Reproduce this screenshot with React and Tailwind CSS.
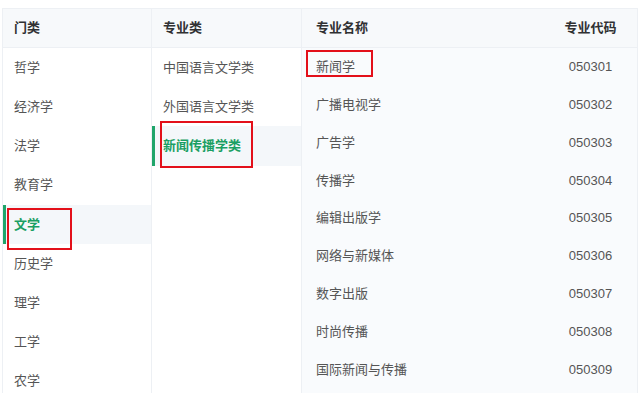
const categories = ["哲学", "经济学", "法学", "教育学", "文学", "历史学", "理学", "工学", "农学"];
const subCategories = ["中国语言文学类", "外国语言文学类", "新闻传播学类"];
const majors = [
  { name: "新闻学", code: "050301" },
  { name: "广播电视学", code: "050302" },
  { name: "广告学", code: "050303" },
  { name: "传播学", code: "050304" },
  { name: "编辑出版学", code: "050305" },
  { name: "网络与新媒体", code: "050306" },
  { name: "数字出版", code: "050307" },
  { name: "时尚传播", code: "050308" },
  { name: "国际新闻与传播", code: "050309" },
];

// 左侧选择列表的一行
const ListItem = ({ label, active, box }) => (
  <div
    className={`relative h-[39.2px] flex items-center pl-[11px] ${
      active ? "bg-[#f4f7fa] text-[#1a9f63] font-bold" : "text-[#555]"
    }`}
  >
    {active && <span className="absolute left-0 top-0 bottom-0 w-[3px] bg-[#1fa56a]" />}
    {label}
    {box && <span className={`absolute border-2 border-[#e3101a] ${box}`} />}
  </div>
);

export default function App() {
  return (
    <div className="w-[640px] h-[393px] overflow-hidden bg-white pt-2 pl-[2px] pr-[2px] text-[13px] font-['Liberation_Sans','Noto_Sans_CJK_SC',sans-serif]">
      <div className="flex h-full border-t border-l border-r border-[#edf0f4]">
        {/* 门类 */}
        <div className="w-[149px] border-r border-[#edf0f4]">
          <div className="h-[39px] flex items-center pl-[11px] bg-[#f7f9fb] border-b border-[#edf0f4] font-bold text-[#303133]">
            门类
          </div>
          {categories.map((c) => (
            <ListItem
              key={c}
              label={c}
              active={c === "文学"}
              box={c === "文学" ? "left-[4px] top-[3px] w-[65px] h-[42px]" : null}
            />
          ))}
        </div>

        {/* 专业类 */}
        <div className="w-[150px] border-r border-[#edf0f4]">
          <div className="h-[39px] flex items-center pl-[11px] bg-[#f7f9fb] border-b border-[#edf0f4] font-bold text-[#303133]">
            专业类
          </div>
          {subCategories.map((s) => (
            <ListItem
              key={s}
              label={s}
              active={s === "新闻传播学类"}
              box={s === "新闻传播学类" ? "left-[8px] -top-[5px] w-[93px] h-[47px]" : null}
            />
          ))}
        </div>

        {/* 专业列表 */}
        <div className="flex-1 bg-[#f9fbfd]">
          <div className="h-[39px] flex items-center bg-[#f7f9fb] border-b border-[#edf0f4] font-bold text-[#303133]">
            <div className="flex-1 pl-[14px]">专业名称</div>
            <div className="w-[93px] text-center">专业代码</div>
          </div>
          {majors.map((m, i) => (
            <div key={m.code} className="h-[37.8px] flex items-center text-[#555]">
              <div className="relative flex-1 pl-[14px]">
                {m.name}
                {i === 0 && (
                  <span className="absolute left-[4px] -top-[7px] w-[67px] h-[27px] border-2 border-[#e3101a]" />
                )}
              </div>
              <div className="w-[93px] text-center">{m.code}</div>
            </div>
          ))}
        </div>
      </div>
    </div>
  );
}
